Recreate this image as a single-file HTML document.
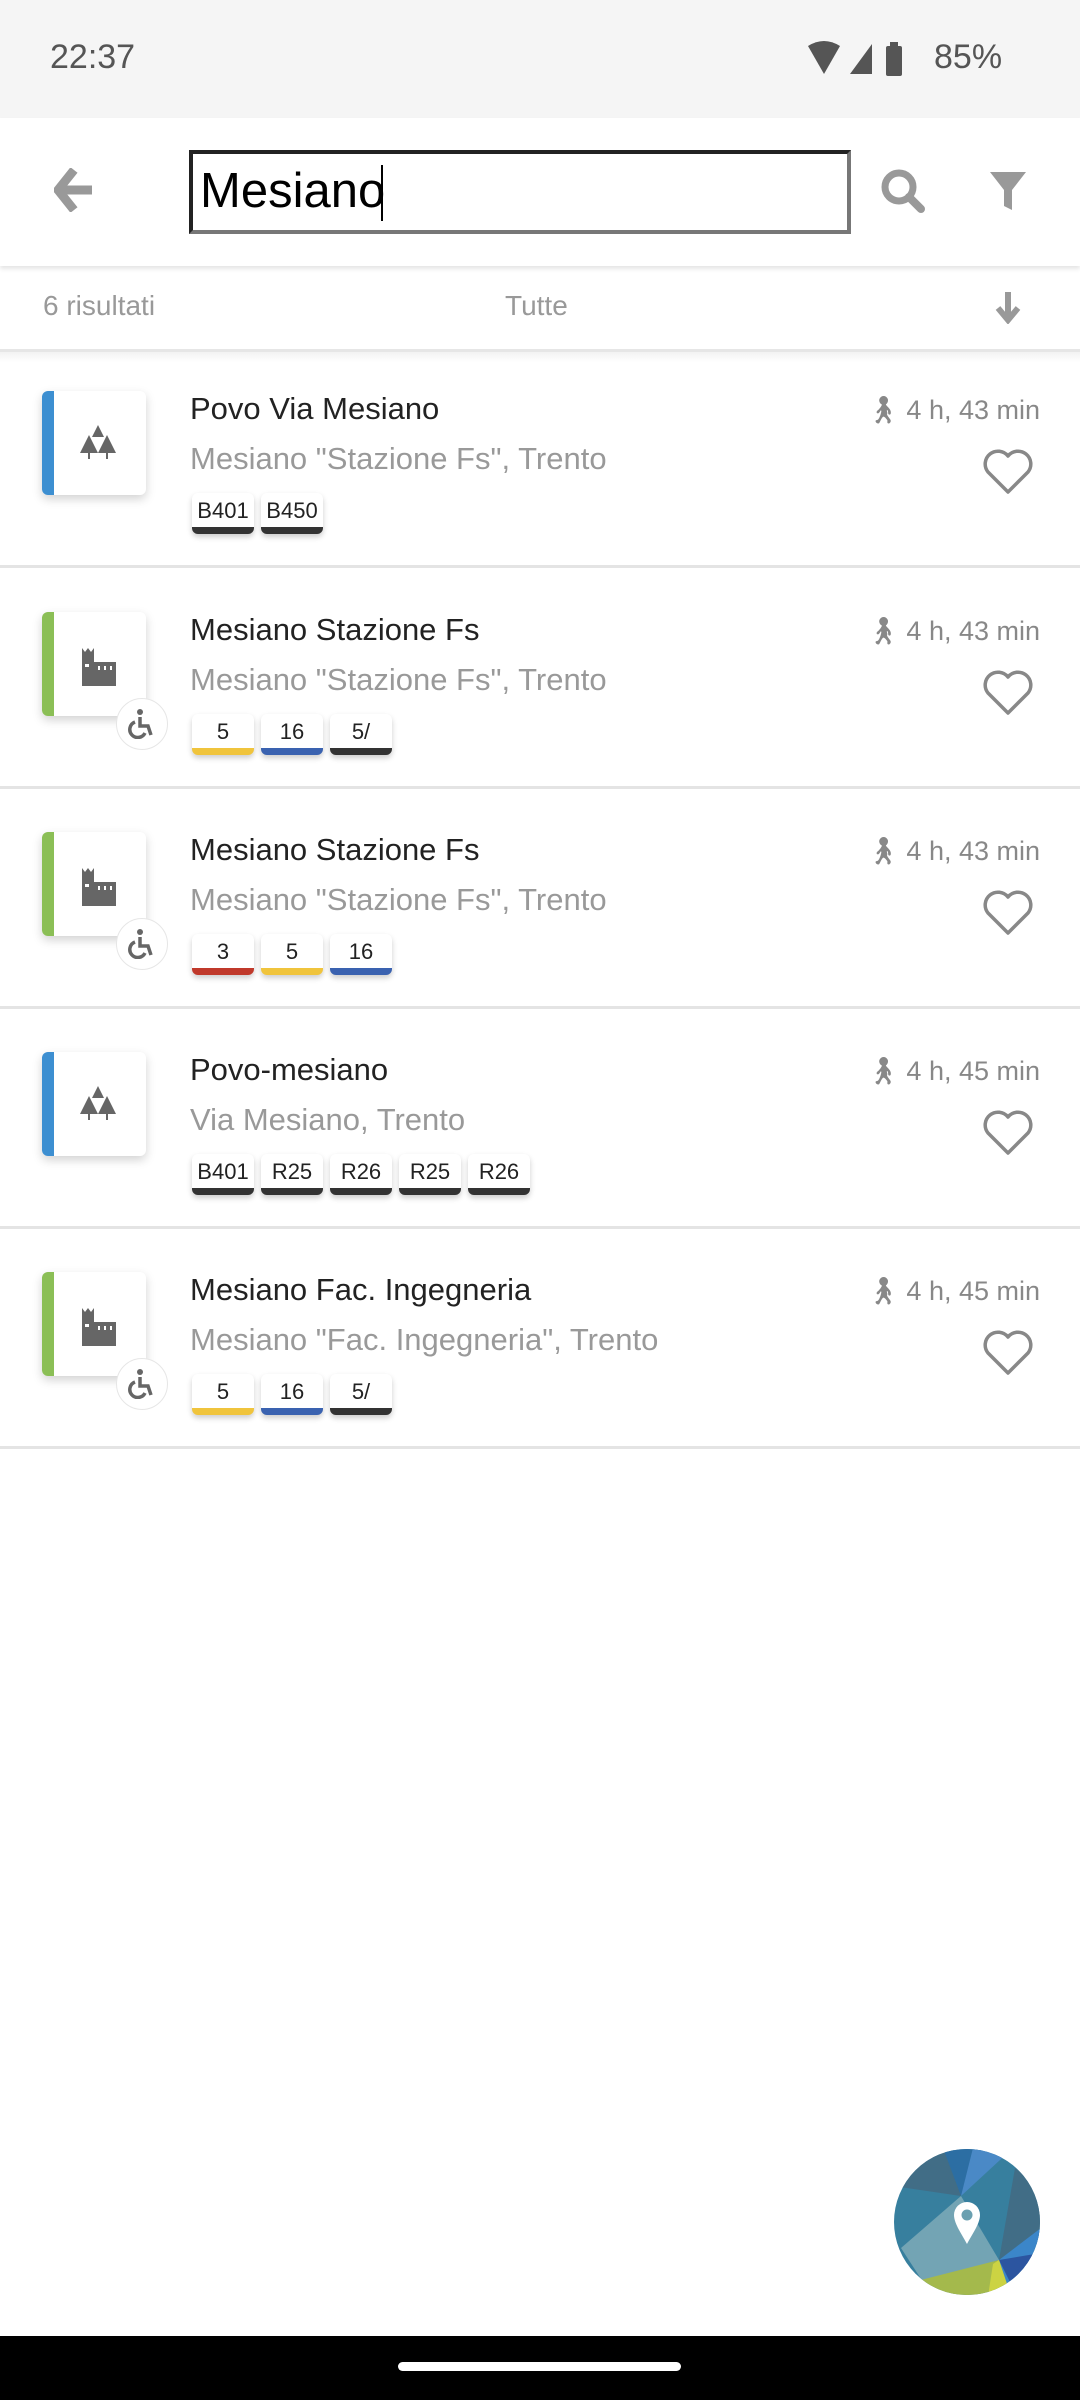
<!DOCTYPE html>
<html><head><meta charset="utf-8">
<style>
*{margin:0;padding:0;box-sizing:border-box}
body{width:1080px;height:2400px;background:#fff;font-family:"Liberation Sans",sans-serif;position:relative;overflow:hidden}
.abs{position:absolute}
.status{left:0;top:0;width:1080px;height:118px;background:#f5f5f5}
.row{position:absolute;left:0;width:1080px;height:220px;border-bottom:3px solid #e4e4e4}
.card{position:absolute;left:42px;top:43px;width:104px;height:104px;background:#fff;border-radius:6px;box-shadow:0 4px 10px rgba(0,0,0,.18);overflow:hidden}
.card .bar{position:absolute;left:0;top:0;width:12px;height:100%}
.card svg{position:absolute;left:36px;top:34px}
.title{position:absolute;left:190px;top:43px;font-size:31px;color:#222}
.sub{position:absolute;left:190px;top:93px;font-size:31px;color:#999}
.walk{position:absolute;right:40px;top:46px;font-size:27px;color:#888;display:flex;align-items:center;gap:6px}
.heart{position:absolute;left:982px;top:100px}
.badges{position:absolute;left:192px;top:145px;display:flex;gap:7px}
.b{width:62px;height:41px;background:#fff;border-radius:6px;box-shadow:0 3px 6px rgba(0,0,0,.2);font-size:22px;color:#222;text-align:center;line-height:36px;border-bottom:7px solid #333}
.wc{position:absolute;left:116px;top:129px;width:52px;height:52px;border-radius:50%;background:#fff;border:1px solid #e6e6e6;display:flex;align-items:center;justify-content:center}
</style></head><body>
<div class="abs status"></div>
<div class="abs" style="left:50px;top:38px;font-size:34px;color:#555">22:37</div>
<svg class="abs" style="left:806px;top:40px" width="96" height="36" viewBox="0 0 96 36">
<path d="M2 6 Q18 -4 34 6 L18 34 Z" fill="#555"/>
<path d="M44 34 L66 34 L66 4 Z" fill="#555"/>
<rect x="80" y="6" width="16" height="30" rx="2" fill="#555"/><rect x="84" y="2" width="8" height="5" fill="#555"/>
</svg>
<div class="abs" style="left:934px;top:38px;font-size:34px;color:#555">85%</div>

<div class="abs" style="left:0;top:118px;width:1080px;height:148px;background:#fff;box-shadow:0 3px 4px rgba(0,0,0,.1)"></div>
<svg class="abs" style="left:54px;top:168px" width="40" height="44" viewBox="0 0 40 44"><path d="M20 2 L4 22 L20 42 M6 22 H38" stroke="#999" stroke-width="9" fill="none" stroke-linejoin="round"/></svg>
<div class="abs" style="left:189px;top:150px;width:662px;height:84px;border:4px solid #222;border-right-color:#777;border-bottom-color:#777;background:#fff"></div>
<div class="abs" style="left:200px;top:163px;font-size:49px;color:#000">Mesiano</div>
<div class="abs" style="left:381px;top:165px;width:2px;height:56px;background:#000"></div>
<svg class="abs" style="left:880px;top:168px" width="46" height="46" viewBox="0 0 46 46"><circle cx="19" cy="19" r="14" stroke="#999" stroke-width="7" fill="none"/><path d="M29 29 L41 41" stroke="#999" stroke-width="8" stroke-linecap="round"/></svg>
<svg class="abs" style="left:988px;top:170px" width="40" height="42" viewBox="0 0 40 42"><path d="M2 2 H38 L24 20 V40 L16 36 V20 Z" fill="#999"/></svg>

<div class="abs" style="left:43px;top:290px;font-size:28px;color:#999">6 risultati</div>
<div class="abs" style="left:505px;top:290px;font-size:28px;color:#999">Tutte</div>
<svg class="abs" style="left:994px;top:290px" width="28" height="34" viewBox="0 0 28 34"><path d="M14 2 V28 M4 18 L14 30 L24 18" stroke="#999" stroke-width="6" fill="none"/></svg>
<div class="abs" style="left:0;top:349px;width:1080px;height:3px;background:#e6e6e6"></div>
<div class="abs" style="left:0;top:352px;width:1080px;height:10px;background:linear-gradient(#f2f2f2,#fff)"></div>

<div class="row" style="top:348px">
 <div class="card"><div class="bar" style="background:#3d8fd1"></div><svg width="40" height="40" viewBox="0 0 40 40"><path d="M20 0 L26 12 H14 Z M11 10 L20 28 H2 Z M29 10 L38 28 H20 Z" fill="#666"/><rect x="10" y="27" width="2" height="7" fill="#666"/><rect x="28" y="27" width="2" height="7" fill="#666"/></svg></div>
 <div class="title">Povo Via Mesiano</div><div class="sub">Mesiano "Stazione Fs", Trento</div>
 <div class="walk">🚶︎<span>4 h, 43 min</span></div>
 <svg class="heart" width="52" height="48" viewBox="0 0 52 48"><path d="M26 44 L6 24 A11 11 0 0 1 26 8 A11 11 0 0 1 46 24 Z" stroke="#888" stroke-width="3.5" fill="none" stroke-linejoin="round"/></svg>
 <div class="badges"><div class="b">B401</div><div class="b">B450</div></div>
</div>
<div class="row" style="top:569px">
 <div class="card"><div class="bar" style="background:#8bbf56"></div><svg width="40" height="40" viewBox="0 0 40 40"><path d="M4 2 L7 6 L10 2 L13 6 L16 2 V16 H38 V40 H4 Z" fill="#666"/><rect x="7" y="18" width="4" height="3" fill="#fff"/><rect x="20" y="20" width="2" height="4" fill="#fff"/><rect x="26" y="20" width="2" height="4" fill="#fff"/><rect x="32" y="20" width="2" height="4" fill="#fff"/></svg></div>
 <div class="wc"><svg width="28" height="30" viewBox="0 0 28 30"><circle cx="12" cy="3" r="3" fill="#666"/><path d="M12 8 V17 H20 L23 26" stroke="#666" stroke-width="3.5" fill="none"/><path d="M7 13 A8 8 0 1 0 17 24" stroke="#666" stroke-width="3.5" fill="none"/></svg></div>
 <div class="title">Mesiano Stazione Fs</div><div class="sub">Mesiano "Stazione Fs", Trento</div>
 <div class="walk">🚶︎<span>4 h, 43 min</span></div>
 <svg class="heart" width="52" height="48" viewBox="0 0 52 48"><path d="M26 44 L6 24 A11 11 0 0 1 26 8 A11 11 0 0 1 46 24 Z" stroke="#888" stroke-width="3.5" fill="none" stroke-linejoin="round"/></svg>
 <div class="badges"><div class="b" style="border-bottom-color:#f0c43c">5</div><div class="b" style="border-bottom-color:#3a62b0">16</div><div class="b">5/</div></div>
</div>
<div class="row" style="top:789px">
 <div class="card"><div class="bar" style="background:#8bbf56"></div><svg width="40" height="40" viewBox="0 0 40 40"><path d="M4 2 L7 6 L10 2 L13 6 L16 2 V16 H38 V40 H4 Z" fill="#666"/><rect x="7" y="18" width="4" height="3" fill="#fff"/><rect x="20" y="20" width="2" height="4" fill="#fff"/><rect x="26" y="20" width="2" height="4" fill="#fff"/><rect x="32" y="20" width="2" height="4" fill="#fff"/></svg></div>
 <div class="wc"><svg width="28" height="30" viewBox="0 0 28 30"><circle cx="12" cy="3" r="3" fill="#666"/><path d="M12 8 V17 H20 L23 26" stroke="#666" stroke-width="3.5" fill="none"/><path d="M7 13 A8 8 0 1 0 17 24" stroke="#666" stroke-width="3.5" fill="none"/></svg></div>
 <div class="title">Mesiano Stazione Fs</div><div class="sub">Mesiano "Stazione Fs", Trento</div>
 <div class="walk">🚶︎<span>4 h, 43 min</span></div>
 <svg class="heart" width="52" height="48" viewBox="0 0 52 48"><path d="M26 44 L6 24 A11 11 0 0 1 26 8 A11 11 0 0 1 46 24 Z" stroke="#888" stroke-width="3.5" fill="none" stroke-linejoin="round"/></svg>
 <div class="badges"><div class="b" style="border-bottom-color:#c0392b">3</div><div class="b" style="border-bottom-color:#f0c43c">5</div><div class="b" style="border-bottom-color:#3a62b0">16</div></div>
</div>
<div class="row" style="top:1009px">
 <div class="card"><div class="bar" style="background:#3d8fd1"></div><svg width="40" height="40" viewBox="0 0 40 40"><path d="M20 0 L26 12 H14 Z M11 10 L20 28 H2 Z M29 10 L38 28 H20 Z" fill="#666"/><rect x="10" y="27" width="2" height="7" fill="#666"/><rect x="28" y="27" width="2" height="7" fill="#666"/></svg></div>
 <div class="title">Povo-mesiano</div><div class="sub">Via Mesiano, Trento</div>
 <div class="walk">🚶︎<span>4 h, 45 min</span></div>
 <svg class="heart" width="52" height="48" viewBox="0 0 52 48"><path d="M26 44 L6 24 A11 11 0 0 1 26 8 A11 11 0 0 1 46 24 Z" stroke="#888" stroke-width="3.5" fill="none" stroke-linejoin="round"/></svg>
 <div class="badges"><div class="b">B401</div><div class="b">R25</div><div class="b">R26</div><div class="b">R25</div><div class="b">R26</div></div>
</div>
<div class="row" style="top:1229px">
 <div class="card"><div class="bar" style="background:#8bbf56"></div><svg width="40" height="40" viewBox="0 0 40 40"><path d="M4 2 L7 6 L10 2 L13 6 L16 2 V16 H38 V40 H4 Z" fill="#666"/><rect x="7" y="18" width="4" height="3" fill="#fff"/><rect x="20" y="20" width="2" height="4" fill="#fff"/><rect x="26" y="20" width="2" height="4" fill="#fff"/><rect x="32" y="20" width="2" height="4" fill="#fff"/></svg></div>
 <div class="wc"><svg width="28" height="30" viewBox="0 0 28 30"><circle cx="12" cy="3" r="3" fill="#666"/><path d="M12 8 V17 H20 L23 26" stroke="#666" stroke-width="3.5" fill="none"/><path d="M7 13 A8 8 0 1 0 17 24" stroke="#666" stroke-width="3.5" fill="none"/></svg></div>
 <div class="title">Mesiano Fac. Ingegneria</div><div class="sub">Mesiano "Fac. Ingegneria", Trento</div>
 <div class="walk">🚶︎<span>4 h, 45 min</span></div>
 <svg class="heart" width="52" height="48" viewBox="0 0 52 48"><path d="M26 44 L6 24 A11 11 0 0 1 26 8 A11 11 0 0 1 46 24 Z" stroke="#888" stroke-width="3.5" fill="none" stroke-linejoin="round"/></svg>
 <div class="badges"><div class="b" style="border-bottom-color:#f0c43c">5</div><div class="b" style="border-bottom-color:#3a62b0">16</div><div class="b">5/</div></div>
</div>

<svg class="abs" style="left:893px;top:2148px" width="148" height="148" viewBox="0 0 148 148">
<defs><clipPath id="c"><circle cx="74" cy="74" r="73"/></clipPath></defs>
<g clip-path="url(#c)">
<rect width="148" height="148" fill="#377f9e"/>
<path d="M0 0 H60 L68 48 L0 38 Z" fill="#416d86"/>
<path d="M50 0 H90 L68 48 Z" fill="#2c6ea3"/>
<path d="M80 0 H120 L68 48 Z" fill="#4a89c6"/>
<path d="M122 20 L148 40 V130 L106 112 Z" fill="#416d86"/>
<path d="M148 80 V148 H110 L106 112 Z" fill="#3b86c9"/>
<path d="M106 112 L148 105 V148 L120 140 Z" fill="#2c55a0"/>
<path d="M8 100 L68 48 L106 112 L30 134 Z" fill="#73a4b4"/>
<path d="M20 134 L106 112 L118 148 H20 Z" fill="#a4b94c"/>
<path d="M100 116 L106 112 L118 148 H95 Z" fill="#ccd343"/>
</g>
<path d="M74 54 A13 13 0 0 1 87 67 C87 76 78 88 74 96 C70 88 61 76 61 67 A13 13 0 0 1 74 54 Z" fill="#fff"/>
<circle cx="74" cy="67" r="5.5" fill="#6aa0b0"/>
</svg>

<div class="abs" style="left:0;top:2336px;width:1080px;height:64px;background:#000"></div>
<div class="abs" style="left:398px;top:2362px;width:283px;height:9px;border-radius:5px;background:#fff"></div>
</body></html>
